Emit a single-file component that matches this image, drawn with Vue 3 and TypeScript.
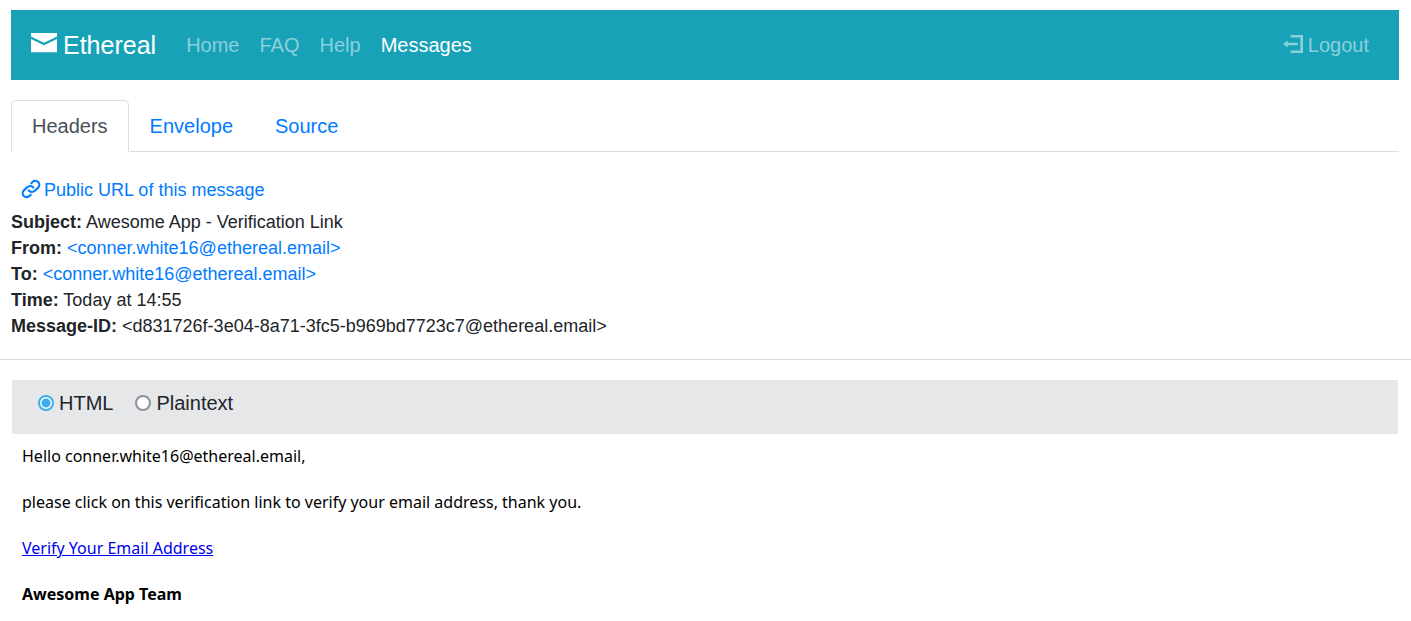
<script setup lang="ts">
import { ref } from 'vue'

interface NavItem {
  label: string
  active: boolean
}

const navItems: NavItem[] = [
  { label: 'Home', active: false },
  { label: 'FAQ', active: false },
  { label: 'Help', active: false },
  { label: 'Messages', active: true },
]

const tabs: string[] = ['Headers', 'Envelope', 'Source']
const activeTab = ref('Headers')
const format = ref<'html' | 'plain'>('html')
const address = 'conner.white16@ethereal.email'
</script>

<template>
  <div class="page">
    <nav class="navbar">
      <a class="brand" href="#">
        <svg class="brand-icon" viewBox="0 0 26 20" aria-hidden="true">
          <path d="M0 0H26V3.5L13 9.8L0 3.5Z" />
          <path d="M0 6L13 12.3L26 6V19.2H0Z" />
        </svg>
        <span>Ethereal</span>
      </a>
      <a
        v-for="item in navItems"
        :key="item.label"
        class="nav-link"
        :class="{ active: item.active }"
        href="#"
      >{{ item.label }}</a>
      <a class="nav-link logout" href="#">
        <svg class="logout-icon" viewBox="0 0 20 18" aria-hidden="true">
          <path d="M7.5 0H20V18H7.5V15.6H17.4V2.4H7.5Z" />
          <path d="M0 9L4.6 5.4V7.8H14.8V10.2H4.6V12.6Z" />
        </svg>
        <span>Logout</span>
      </a>
    </nav>

    <div class="tabs" role="tablist">
      <button
        v-for="tab in tabs"
        :key="tab"
        type="button"
        role="tab"
        class="tab"
        :class="{ active: activeTab === tab }"
        :aria-selected="activeTab === tab"
        @click="activeTab = tab"
      >{{ tab }}</button>
    </div>

    <section class="headers">
      <a class="public-link" href="#">
        <svg class="link-icon" viewBox="1 1 22 22" aria-hidden="true">
          <path d="M9.2 13.8a5 5 0 0 0 7.5.2l4-3.7a4.8 4.8 0 0 0-6.8-6.9l-1.6 1.5" />
          <path d="M14.8 10.2a5 5 0 0 0-7.5-.2l-4 3.7a4.8 4.8 0 0 0 6.8 6.9l1.6-1.5" />
        </svg>
        <span>Public URL of this message</span>
      </a>
      <div><strong>Subject:</strong> Awesome App - Verification Link</div>
      <div><strong>From:</strong> <a href="#">&lt;{{ address }}&gt;</a></div>
      <div><strong>To:</strong> <a href="#">&lt;{{ address }}&gt;</a></div>
      <div><strong>Time:</strong> Today at 14:55</div>
      <div><strong>Message-ID:</strong> &lt;d831726f-3e04-8a71-3fc5-b969bd7723c7@ethereal.email&gt;</div>
    </section>

    <hr class="divider">

    <div class="format-bar">
      <label class="choice">
        <input v-model="format" type="radio" name="format" value="html">
        <span>HTML</span>
      </label>
      <label class="choice">
        <input v-model="format" type="radio" name="format" value="plain">
        <span>Plaintext</span>
      </label>
    </div>

    <article class="message">
      <p>Hello {{ address }},</p>
      <p>please click on this verification link to verify your email address, thank you.</p>
      <p><a href="#">Verify Your Email Address</a></p>
      <p><strong>Awesome App Team</strong></p>
    </article>
  </div>
</template>

<style>
body {
  margin: 0;
  background: #fff;
}
</style>

<style scoped>
.page {
  padding-top: 10px;
  color: #212529;
  font-family: "Liberation Sans", Arial, sans-serif;
  font-size: 20px;
  line-height: 30px;
}

a {
  color: #007bff;
  text-decoration: none;
}

.navbar {
  display: flex;
  align-items: center;
  gap: 20px;
  margin: 0 12px 0 11px;
  padding: 15px 30px 15px 20px;
  background: #17a2b8;
}

.brand {
  display: flex;
  align-items: center;
  gap: 6px;
  margin-right: 10px;
  color: #fff;
  font-size: 25px;
  line-height: 40px;
}

.brand-icon {
  width: 26px;
  height: 20px;
  margin-bottom: 4px;
  fill: currentColor;
}

.nav-link {
  color: rgba(255, 255, 255, 0.5);
}

.nav-link.active {
  color: #fff;
}

.logout {
  display: flex;
  align-items: center;
  gap: 5px;
  margin-left: auto;
}

.logout-icon {
  width: 20px;
  height: 18px;
  margin-bottom: 2px;
  fill: currentColor;
}

.tabs {
  display: flex;
  margin: 20px 12px 0 11px;
  border-bottom: 1px solid #ddd;
}

.tab {
  margin: 0 0 -1px;
  padding: 10px 20px;
  border: 1px solid transparent;
  border-radius: 5px 5px 0 0;
  background: transparent;
  color: #007bff;
  font: inherit;
  cursor: pointer;
}

.tab.active {
  border-color: #ddd #ddd #fff;
  background: #fff;
  color: #495057;
}

.headers {
  margin: 20px 11px;
  font-size: 18px;
  line-height: 26px;
}

.public-link {
  display: flex;
  align-items: center;
  gap: 4px;
  width: fit-content;
  padding: 5px 11px 6px;
}

.link-icon {
  width: 18px;
  height: 18px;
  margin-bottom: 2px;
  overflow: visible;
  fill: none;
  stroke: currentColor;
  stroke-width: 2.6;
  stroke-linecap: round;
}

.divider {
  height: 1px;
  margin: 0;
  border: 0;
  background: #dbdbe1;
}

.format-bar {
  display: flex;
  gap: 22px;
  margin: 20px 13px 0 12px;
  padding: 8px 26px 16px;
  background: #e6e7e9;
}

.choice {
  display: flex;
  align-items: center;
  gap: 5px;
}

.choice input {
  appearance: none;
  width: 16px;
  height: 16px;
  margin: 0;
  border: 2px solid #8f8f9d;
  border-radius: 50%;
  background: #fff;
}

.choice input:checked {
  border-color: #3daee9;
  background: radial-gradient(circle, #3daee9 4px, #fff 5px);
}

.message {
  padding: 11px 22px;
  color: #000;
  font-family: "Noto Sans", sans-serif;
  font-size: 16px;
  line-height: 23px;
}

.message p {
  margin: 0 0 23px;
}

.message p:last-child {
  margin-bottom: 0;
}

.message a {
  color: #0000ee;
  text-decoration: underline;
}
</style>
